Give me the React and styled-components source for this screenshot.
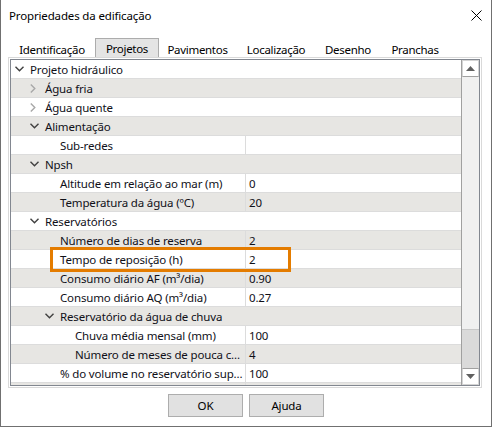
import React from 'react'
import styled, { createGlobalStyle } from 'styled-components'

const GlobalStyle = createGlobalStyle`
    html, body {
        margin: 0;
        padding: 0;
        background: #ffffff;
    }
    body {
        font-family: "Noto Sans", "Open Sans", sans-serif;
        font-size: 11.5px;
        letter-spacing: -0.15px;
        color: #101018;
    }
`

const Window = styled.div`
    position: relative;
    width: 492px;
    height: 427px;
    box-sizing: border-box;
    border: 1px solid #707070;
    border-top: none;
    background: #ffffff;
    display: flex;
    flex-direction: column;
`
const TitleBar = styled.div`
    height: 31px;
    display: flex;
    align-items: center;
    justify-content: space-between;
    padding: 0 9px 0 8px;
`
const Title = styled.span`
    color: #000;
`
const Content = styled.div`
    padding: 7px 9px 0 7px;
`
const TabStrip = styled.div`
    display: flex;
    align-items: flex-end;
    height: 19px;
    padding-left: 1px;
`
const Tab = styled.div`
    width: ${p => p.w}px;
    height: ${p => (p.active ? '19px' : '17px')};
    display: flex;
    align-items: center;
    justify-content: center;
    box-sizing: border-box;
    white-space: nowrap;
    letter-spacing: -0.3px;
    background: ${p => (p.active ? '#e4e4e4' : 'transparent')};
    border: 1px solid ${p => (p.active ? '#acacac' : 'transparent')};
    border-bottom: none;
    color: #000;
`
const TabPanel = styled.div`
    border: 1px solid #d9d9d9;
    padding: 1px;
    height: 331px;
    box-sizing: border-box;
`
const Grid = styled.div`
    display: flex;
    height: 100%;
    box-sizing: border-box;
    border: 1px solid #828790;
    background: #ffffff;
`
const Rows = styled.div`
    flex: 1;
    overflow: hidden;
`
const Row = styled.div`
    height: 19px;
    box-sizing: border-box;
    display: flex;
    border-bottom: 1px solid #dcdcdc;
    background: ${p => (p.shade ? '#e7e6e3' : '#ffffff')};
`
const NameCell = styled.div`
    display: flex;
    align-items: center;
    width: ${p => (p.category ? 'auto' : '235px')};
    flex: ${p => (p.category ? '1' : 'none')};
    padding-left: ${p => p.indent}px;
    box-sizing: border-box;
    white-space: nowrap;
    overflow: hidden;
    border-right: ${p => (p.category ? 'none' : '1px solid #dcdcdc')};
`
const Toggle = styled.span`
    width: 15px;
    display: flex;
    align-items: center;
    flex: none;
`
const ValueCell = styled.div`
    flex: 1;
    display: flex;
    align-items: center;
    padding-left: 3px;
    white-space: nowrap;
`
const ScrollBar = styled.div`
    width: 17px;
    display: flex;
    flex-direction: column;
    background: #dadada;
    border-left: 1px solid #a0a0a0;
`
const ScrollButton = styled.div`
    height: 17px;
    box-sizing: border-box;
    background: #ffffff;
    border: 1px solid #d4d4d4;
    border-bottom-color: ${p => (p.down ? '#d4d4d4' : '#a0a0a0')};
    border-top-color: ${p => (p.down ? '#a0a0a0' : '#d4d4d4')};
    display: flex;
    align-items: center;
    justify-content: center;
    flex: none;
`
const Thumb = styled.div`
    height: 252px;
    background: #f0f0f0;
    border-bottom: 1px solid #c8c8c8;
    flex: none;
`
const Track = styled.div`
    flex: 1;
`
const ButtonBar = styled.div`
    display: flex;
    justify-content: center;
    gap: 6px;
    padding-top: 6px;
`
const Button = styled.button`
    width: 75px;
    height: 23px;
    background: #e1e1e1;
    border: 1px solid #adadad;
    font-family: "Noto Sans", "Open Sans", sans-serif;
    font-size: 11.5px;
    letter-spacing: -0.15px;
    color: #000;
    padding: 0;
`
const Highlight = styled.div`
    position: absolute;
    left: 49px;
    top: 247px;
    width: 241px;
    height: 25px;
    box-sizing: border-box;
    border: 3px solid #e47c00;
    pointer-events: none;
`

const tabs = [
    { label: 'Identificação', w: 86 },
    { label: 'Projetos', w: 64, active: true },
    { label: 'Pavimentos', w: 77 },
    { label: 'Localização', w: 80 },
    { label: 'Desenho', w: 64 },
    { label: 'Pranchas', w: 70 },
]

const rows = [
    { level: 0, label: 'Projeto hidráulico', toggle: 'open' },
    { level: 1, label: 'Água fria', toggle: 'closed' },
    { level: 1, label: 'Água quente', toggle: 'closed' },
    { level: 1, label: 'Alimentação', toggle: 'open' },
    { level: 2, label: 'Sub-redes', value: '' },
    { level: 1, label: 'Npsh', toggle: 'open' },
    { level: 2, label: 'Altitude em relação ao mar (m)', value: '0' },
    { level: 2, label: 'Temperatura da água (ºC)', value: '20' },
    { level: 1, label: 'Reservatórios', toggle: 'open' },
    { level: 2, label: 'Número de dias de reserva', value: '2' },
    { level: 2, label: 'Tempo de reposição (h)', value: '2' },
    { level: 2, label: 'Consumo diário AF (m³/dia)', value: '0.90' },
    { level: 2, label: 'Consumo diário AQ (m³/dia)', value: '0.27' },
    { level: 2, label: 'Reservatório da água de chuva', toggle: 'open' },
    { level: 3, label: 'Chuva média mensal (mm)', value: '100' },
    { level: 3, label: 'Número de meses de pouca c...', value: '4' },
    { level: 2, label: '% do volume no reservatório sup...', value: '100' },
    { level: 2, label: '', value: '' },
]

const Chevron = ({ open }) => open ? (
    <svg width="9" height="6" viewBox="0 0 9 6">
        <polyline points="0.5,0.8 4.5,4.8 8.5,0.8" fill="none" stroke="#404040" strokeWidth="1.4" />
    </svg>
) : (
    <svg width="6" height="9" viewBox="0 0 6 9">
        <polyline points="0.8,0.5 4.8,4.5 0.8,8.5" fill="none" stroke="#a8a8a8" strokeWidth="1.4" />
    </svg>
)

function App() {
    return (
        <>
            <GlobalStyle />
            <Window>
                <TitleBar>
                    <Title>Propriedades da edificação</Title>
                    <svg width="11" height="11" viewBox="0 0 11 11">
                        <path d="M0.5,0.5 L10.5,10.5 M10.5,0.5 L0.5,10.5" stroke="#000" strokeWidth="1" />
                    </svg>
                </TitleBar>
                <Content>
                    <TabStrip>
                        {tabs.map(t => <Tab key={t.label} w={t.w} active={t.active}>{t.label}</Tab>)}
                    </TabStrip>
                    <TabPanel>
                        <Grid>
                            <Rows>
                                {rows.map((r, i) => {
                                    const category = !!r.toggle
                                    const indent = 4 + r.level * 15 + (category ? 0 : 15)
                                    return (
                                        <Row key={i} shade={i % 2 === 1}>
                                            <NameCell category={category} indent={indent}>
                                                {category && <Toggle><Chevron open={r.toggle === 'open'} /></Toggle>}
                                                {r.label}
                                            </NameCell>
                                            {!category && <ValueCell>{r.value}</ValueCell>}
                                        </Row>
                                    )
                                })}
                            </Rows>
                            <ScrollBar>
                                <ScrollButton>
                                    <svg width="9" height="5" viewBox="0 0 9 5"><polygon points="0,5 4.5,0 9,5" fill="#606060" /></svg>
                                </ScrollButton>
                                <Thumb />
                                <Track />
                                <ScrollButton down>
                                    <svg width="9" height="5" viewBox="0 0 9 5"><polygon points="0,0 4.5,5 9,0" fill="#606060" /></svg>
                                </ScrollButton>
                            </ScrollBar>
                        </Grid>
                    </TabPanel>
                </Content>
                <ButtonBar>
                    <Button>OK</Button>
                    <Button>Ajuda</Button>
                </ButtonBar>
                <Highlight />
            </Window>
        </>
    )
}

export default App
